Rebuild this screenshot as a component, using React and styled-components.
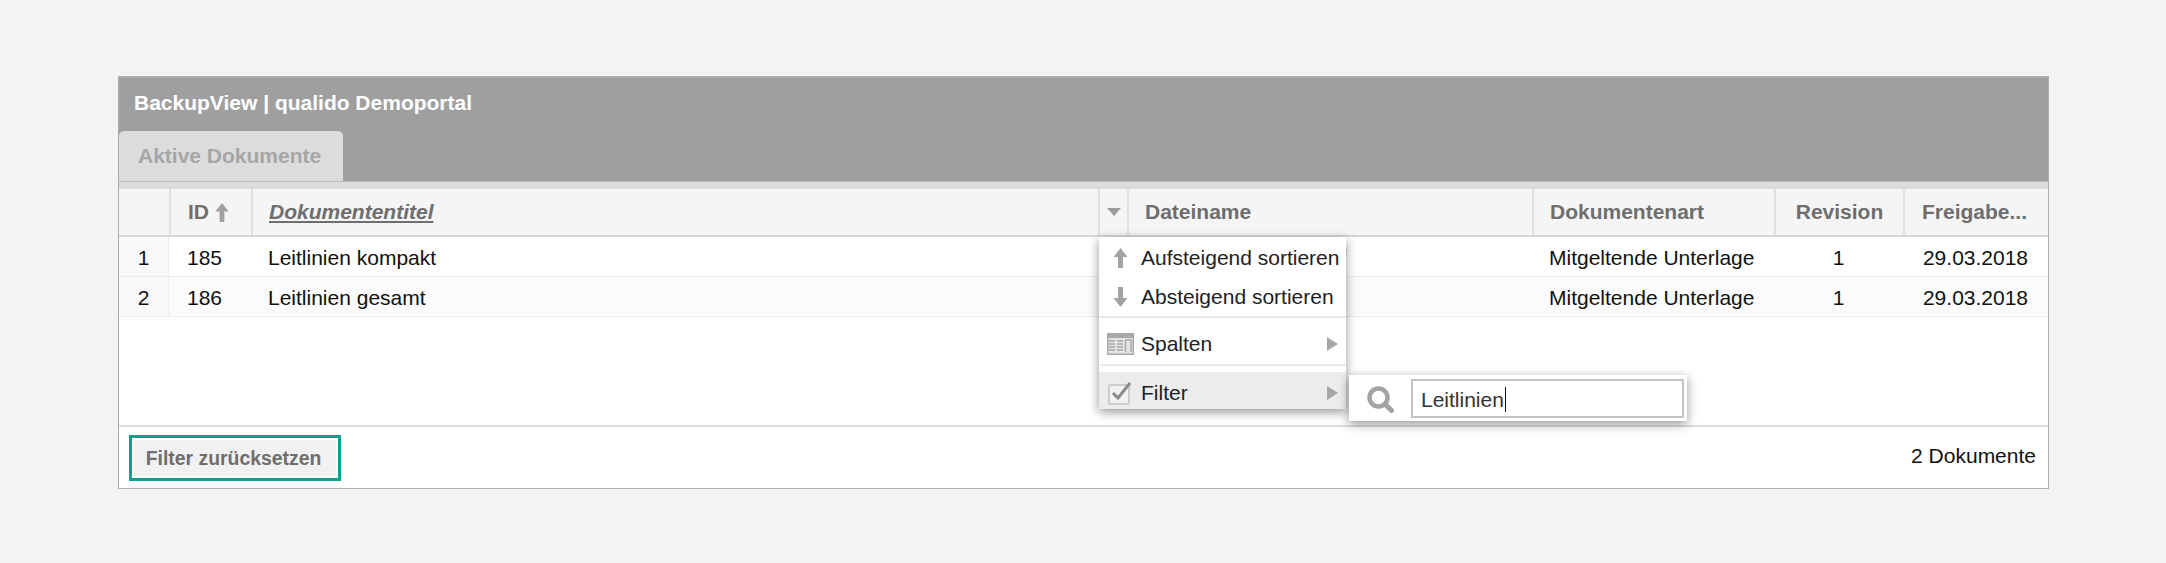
import React from 'react'
import styled, { createGlobalStyle } from 'styled-components'

const GlobalStyle = createGlobalStyle`
  html, body {
    margin: 0;
    padding: 0;
    background: #f2f4f3;
    font-family: "Liberation Sans", Arial, sans-serif;
  }
`

const Page = styled.div`
  width: 2166px;
  height: 563px;
  padding: 76px 117px 0 118px;
  box-sizing: border-box;
  overflow: hidden;
`

const Panel = styled.div`
  position: relative;
  height: 413px;
  box-sizing: border-box;
  border: 1.5px solid #adadad;
  border-top-width: 2px;
  background: #fff;
  display: flex;
  flex-direction: column;
`

const TitleBar = styled.div`
  background: #9f9f9f;
  height: 103px;
  display: flex;
  flex-direction: column;
  justify-content: space-between;
  flex-shrink: 0;
`

const Title = styled.div`
  color: #fff;
  font-weight: 700;
  font-size: 21px;
  line-height: 24px;
  padding: 13px 0 0 15px;
`

const Tab = styled.div`
  width: 224px;
  height: 50px;
  box-sizing: border-box;
  background: #dcdcdc;
  border-radius: 5px 5px 0 0;
  color: #a6a6a6;
  font-weight: 700;
  font-size: 21px;
  line-height: 50px;
  padding-left: 19px;
`

const TabStrip = styled.div`
  height: 8px;
  background: #dcdcdc;
  border-top: 1px solid #bdbdbd;
  box-sizing: border-box;
  flex-shrink: 0;
`

const columns = '50px 82px 847px 29px 405px 242px 129px 1fr'

const HeadRow = styled.div`
  display: grid;
  grid-template-columns: ${columns};
  height: 48px;
  box-sizing: border-box;
  background: #f5f5f5;
  border-bottom: 2px solid #d6d6d6;
  flex-shrink: 0;
`

const HeadCell = styled.div`
  display: flex;
  align-items: center;
  justify-content: ${p => (p.$center ? 'center' : 'flex-start')};
  padding-left: ${p => (p.$center ? 0 : p.$pad ?? 16)}px;
  box-sizing: border-box;
  border-left: ${p => (p.$first ? 'none' : '2px solid #e0e0e0')};
  color: #6e6e6e;
  font-weight: 700;
  font-size: 21px;
  white-space: nowrap;
  overflow: hidden;
  gap: 5px;
`

const SortedTitle = styled.span`
  font-style: italic;
  text-decoration: underline;
`

const Row = styled.div`
  display: grid;
  grid-template-columns: ${columns};
  height: 40px;
  box-sizing: border-box;
  background: ${p => (p.$alt ? '#fbfbfb' : '#fff')};
  border-bottom: 1px solid #ececec;
  flex-shrink: 0;
`

const Cell = styled.div`
  display: flex;
  align-items: center;
  justify-content: ${p => (p.$center ? 'center' : 'flex-start')};
  padding-left: ${p => (p.$center ? 0 : p.$pad ?? 17)}px;
  padding-top: 2px;
  box-sizing: border-box;
  background: ${p => (p.$index ? '#f8f8f8' : 'transparent')};
  border-right: ${p => (p.$index ? '1px solid #eeeeee' : 'none')};
  color: #111;
  font-size: 21px;
  white-space: nowrap;
`

const Spacer = styled.div`
  flex: 1;
`

const Footer = styled.div`
  height: 63px;
  box-sizing: border-box;
  border-top: 2px solid #dcdcdc;
  padding: 8px 12px 0 10px;
  display: flex;
  align-items: flex-start;
  justify-content: space-between;
  flex-shrink: 0;
`

const ResetButton = styled.button`
  width: 212px;
  height: 46px;
  box-sizing: border-box;
  border: 3px solid #0f9f8c;
  padding: 0 3px 0 0;
  background: #f1f1f1;
  box-shadow: inset 0 0 0 2px #fff;
  color: #6e6e6e;
  font-family: inherit;
  font-weight: 700;
  font-size: 19.4px;
`

const Count = styled.div`
  color: #111;
  font-size: 21px;
  line-height: 42px;
`

const Menu = styled.div`
  position: absolute;
  left: 980px;
  top: 159px;
  width: 247px;
  height: 172px;
  box-sizing: border-box;
  background: #fff;
  box-shadow: 0 3px 10px rgba(0, 0, 0, 0.42);
  display: flex;
  flex-direction: column;
`

const MenuItem = styled.div`
  height: ${p => p.$h}px;
  padding-top: ${p => p.$shift ?? 0}px;
  box-sizing: border-box;
  flex-shrink: 0;
  display: grid;
  grid-template-columns: 42px 1fr 28px;
  align-items: center;
  background: ${p => (p.$active ? '#ececec' : 'transparent')};
  color: #222;
  font-size: 21px;
  white-space: nowrap;
`

const MenuIcon = styled.span`
  display: flex;
  justify-content: center;
  align-items: center;
`

const MenuSep = styled.div`
  height: 2px;
  margin-left: 1px;
  background: #e9e9e9;
  flex-shrink: 0;
`

const SubMenu = styled.div`
  position: absolute;
  left: 1230px;
  top: 297px;
  width: 338px;
  height: 46px;
  box-sizing: border-box;
  background: #fff;
  box-shadow: 0 3px 10px rgba(0, 0, 0, 0.42);
  padding: 4px 3px 3px 0;
  display: grid;
  grid-template-columns: 62px 1fr;
  align-items: stretch;
`

const SearchIcon = styled.span`
  display: flex;
  align-items: center;
  justify-content: center;
  padding-top: 1px;
`

const FilterInput = styled.div`
  border: 2px solid #c4c4c4;
  box-sizing: border-box;
  display: flex;
  align-items: center;
  padding: 2px 0 0 8px;
  color: #333;
  font-size: 21px;
`

const Caret = styled.span`
  display: inline-block;
  width: 1.5px;
  height: 25px;
  background: #111;
  margin-left: 1px;
`

const Arrow = ({ down }) => (
  <svg width="17" height="22" viewBox="0 0 17 22" style={{ transform: down ? 'rotate(180deg)' : 'none' }}>
    <path d="M8.5 1 15.5 10H11V21H6V10H1.5Z" fill="#a3a3a3" />
  </svg>
)

const SortArrow = () => (
  <svg width="16" height="21" viewBox="0 0 17 22" style={{ display: 'block' }}>
    <path d="M8.5 1 15.5 10H11V21H6V10H1.5Z" fill="#a0a0a0" />
  </svg>
)

const SubArrow = () => (
  <svg width="11" height="14" viewBox="0 0 11 14">
    <path d="M0 0 11 7 0 14Z" fill="#a6a6a6" />
  </svg>
)

const DropArrow = () => (
  <svg width="14" height="8" viewBox="0 0 14 8">
    <path d="M0 0H14L7 8Z" fill="#9c9c9c" />
  </svg>
)

const ColumnsIcon = () => (
  <svg width="27" height="22" viewBox="0 0 27 22">
    <rect x="0" y="0" width="27" height="22" fill="#a8a8a8" />
    <rect x="1.5" y="5" width="24" height="15.5" fill="#e4e4e4" />
    <path d="M2 8H8M2 11H8M2 14H8M2 17H8M10 8H16M10 11H16M10 14H16M10 17H16" stroke="#a8a8a8" strokeWidth="1.4" />
    <path d="M18.5 7V19M18.5 7H24M24 7V19" stroke="#a8a8a8" strokeWidth="1.4" fill="#fff" />
  </svg>
)

const CheckIcon = () => (
  <svg width="24" height="24" viewBox="0 0 24 24">
    <rect x="1" y="4" width="20" height="19" rx="1.5" fill="#f2f2f2" stroke="#cccccc" strokeWidth="2" />
    <path d="M5 12 10 17 22 2" fill="none" stroke="#8a8a8a" strokeWidth="3" />
  </svg>
)

const Magnifier = () => (
  <svg width="27" height="27" viewBox="0 0 27 27">
    <circle cx="11.5" cy="11.5" r="9" fill="none" stroke="#a3a3a3" strokeWidth="4.5" />
    <path d="M18 18 24.5 24.5" stroke="#a3a3a3" strokeWidth="5" strokeLinecap="round" />
  </svg>
)

const rows = [
  { n: 1, id: 185, title: 'Leitlinien kompakt', file: 'Leitlinien kompakt.pdf', kind: 'Mitgeltende Unterlage', rev: 1, date: '29.03.2018' },
  { n: 2, id: 186, title: 'Leitlinien gesamt', file: 'Leitlinien gesamt.pdf', kind: 'Mitgeltende Unterlage', rev: 1, date: '29.03.2018' },
]

export default function App() {
  return (
    <Page>
      <GlobalStyle />
      <Panel>
        <TitleBar>
          <Title>BackupView | qualido Demoportal</Title>
          <Tab>Aktive Dokumente</Tab>
        </TitleBar>
        <TabStrip />
        <HeadRow>
          <HeadCell $first />
          <HeadCell $pad={17}>ID <SortArrow /></HeadCell>
          <HeadCell><SortedTitle>Dokumententitel</SortedTitle></HeadCell>
          <HeadCell $center><DropArrow /></HeadCell>
          <HeadCell>Dateiname</HeadCell>
          <HeadCell>Dokumentenart</HeadCell>
          <HeadCell $center>Revision</HeadCell>
          <HeadCell $pad={17}>Freigabe...</HeadCell>
        </HeadRow>
        {rows.map((r, i) => (
          <Row key={r.id} $alt={i === 1}>
            <Cell $index $center>{r.n}</Cell>
            <Cell $pad={18}>{r.id}</Cell>
            <Cell>{r.title}</Cell>
            <Cell />
            <Cell $pad={16}>{r.file}</Cell>
            <Cell>{r.kind}</Cell>
            <Cell $center>{r.rev}</Cell>
            <Cell $center>{r.date}</Cell>
          </Row>
        ))}
        <Spacer />
        <Footer>
          <ResetButton>Filter zurücksetzen</ResetButton>
          <Count>2 Dokumente</Count>
        </Footer>
        <Menu>
          <MenuItem $h={41}><MenuIcon><Arrow /></MenuIcon>Aufsteigend sortieren<span /></MenuItem>
          <MenuItem $h={38}><MenuIcon><Arrow down /></MenuIcon>Absteigend sortieren<span /></MenuItem>
          <MenuSep />
          <MenuItem $h={46} $shift={5}><MenuIcon><ColumnsIcon /></MenuIcon>Spalten<MenuIcon><SubArrow /></MenuIcon></MenuItem>
          <MenuSep />
          <MenuItem $h={6} />
          <MenuItem $h={37} $shift={5} $active><MenuIcon><CheckIcon /></MenuIcon>Filter<MenuIcon><SubArrow /></MenuIcon></MenuItem>
        </Menu>
        <SubMenu>
          <SearchIcon><Magnifier /></SearchIcon>
          <FilterInput>Leitlinien<Caret /></FilterInput>
        </SubMenu>
      </Panel>
    </Page>
  )
}
